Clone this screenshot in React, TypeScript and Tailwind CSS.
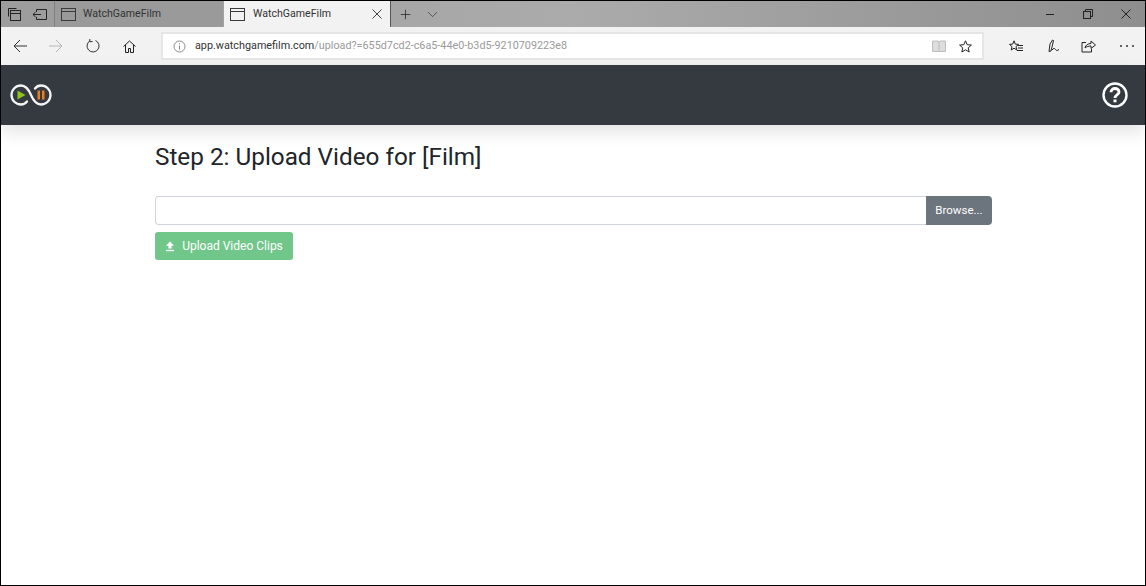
import React from 'react';
import { ChevronDown, Plus } from 'lucide-react';

const uiFont = "font-['Roboto','Noto_Sans',sans-serif]";

const TabIcon = () => (
  <svg className="shrink-0" width="15" height="13" viewBox="0 0 15 13" fill="none" stroke="#3a3a3a" strokeWidth="1">
    <rect x="0.500" y="0.500" width="14" height="12" />
    <path d="M0.500 3.500h14" />
  </svg>
);

const Logo = () => (
  <svg width="44" height="24" viewBox="0 0 44 24" fill="none">
    <path
      d="M22 12C19.500 6 16.500 2.500 12 2.500a9.500 9.500 0 0 0 0 19c2.500 0 4.500-1 6-3M22 12c2.500 6 5.500 9.500 10 9.500a9.500 9.500 0 0 0 0-19c-2.500 0-4.500 1-6 3"
      stroke="#f4f4f4"
      strokeWidth="2.300"
      strokeLinecap="round"
    />
    <path d="M8.500 7.500l8 4.500-8 4.500z" fill="#8fc31f" />
    <rect x="28.500" y="7.500" width="2.500" height="9" fill="#e87d25" />
    <rect x="33" y="7.500" width="2.500" height="9" fill="#e87d25" />
  </svg>
);

const UploadGlyph = () => (
  <svg width="10" height="11" viewBox="0 0 10 11" fill="#ffffff">
    <path d="M5 0.500L9 4.700H6.600V7.500H3.400V4.700H1z" />
    <rect x="1" y="8.800" width="8" height="1.400" />
  </svg>
);

const Back = ({ color }: { color: string }) => (
  <svg width="14" height="14" viewBox="0 0 14 14" fill="none" stroke={color} strokeWidth="1">
    <path d="M1 7h13M7 1L1 7l6 6" />
  </svg>
);

export default function App() {
  return (
    <div className="h-[586px] w-[1146px] overflow-hidden border border-black bg-white">
      {/* title bar */}
      <div className={`flex h-[26px] items-stretch bg-linear-to-r from-[#9c9c9c] via-[#ababab] to-[#8e8e8e] ${uiFont}`}>
        <div className="flex w-[54px] items-center border-r border-[#808080]">
          <svg className="ml-[7px]" width="13" height="13" viewBox="0 0 13 13" fill="none" stroke="#222" strokeWidth="1">
            <path d="M0.500 8.500V0.500H8.500" />
            <rect x="2.500" y="2.500" width="10" height="10" />
            <path d="M2.500 5.500h10" />
          </svg>
          <svg className="ml-[12px]" width="14" height="11" viewBox="0 0 14 11" fill="none" stroke="#222" strokeWidth="1">
            <path d="M3.500 3V0.500h10v10h-10V8M0 5.500h8M2.500 3L0 5.500 2.500 8" />
          </svg>
        </div>
        <div className="flex w-[168px] items-center gap-[7px] bg-[#9a9a9a] pl-[6px] text-[10.600px] text-[#333333]">
          <TabIcon />
          <span>WatchGameFilm</span>
        </div>
        <div className="ml-px flex w-[166px] items-center bg-[#f2f2f2] pl-[6px] text-[10.600px] text-[#333333]">
          <TabIcon />
          <span className="ml-[8px]">WatchGameFilm</span>
          <svg className="ml-auto mr-[8px] shrink-0" width="10" height="10" viewBox="0 0 10 10" stroke="#444" strokeWidth="1">
            <path d="M0.500 0.500l9 9M9.500 0.500l-9 9" />
          </svg>
        </div>
        <div className="flex items-center border-l border-[#555555]">
          <Plus className="ml-[7px] text-[#222222]" size={15} strokeWidth={1.2} />
          <ChevronDown className="ml-[11px] text-[#333333]" size={17} strokeWidth={1} />
        </div>
        <div className="ml-auto flex items-center pr-[14px]">
          <div className="h-px w-[8px] bg-[#222222]" />
          <svg className="ml-[29px]" width="10" height="10" viewBox="0 0 10 10" fill="none" stroke="#222" strokeWidth="1">
            <rect x="0.500" y="2.500" width="7" height="7" />
            <path d="M2.500 2.500V0.500h7v7H7.500" />
          </svg>
          <svg className="ml-[28px]" width="10" height="10" viewBox="0 0 10 10" stroke="#222" strokeWidth="1">
            <path d="M0.500 0.500l9 9M9.500 0.500l-9 9" />
          </svg>
        </div>
      </div>

      {/* address bar */}
      <div className={`flex h-[38px] items-center bg-[#f2f2f2] ${uiFont}`}>
        <div className="ml-[12px]"><Back color="#333333" /></div>
        <div className="ml-[22px] rotate-180"><Back color="#b5b5b5" /></div>
        <svg className="ml-[23px]" width="14" height="14" viewBox="0 0 14 14" fill="none" stroke="#333" strokeWidth="1">
          <path d="M4 1.800A6 6 0 1 0 9.500 1.500M3.800 0v2.600h2.800" />
        </svg>
        <svg className="ml-[23px]" width="13" height="13" viewBox="0 0 13 13" fill="none" stroke="#222" strokeWidth="1">
          <path d="M0.500 6.500L6.500 1l6 5.500M2.500 5v7.500h3V8.500h2v4h3V5" />
        </svg>
        <div className="ml-[25px] flex h-[28px] w-[823px] items-center border-2 border-[#e6e6e6] bg-white pl-[10px]">
          <svg className="shrink-0" width="13" height="13" viewBox="0 0 13 13" fill="none" stroke="#8a8a8a" strokeWidth="1">
            <circle cx="6.500" cy="6.500" r="5.500" />
            <path d="M6.500 5.500v4M6.500 3.300v1" />
          </svg>
          <span className="ml-[9px] text-[10.800px] text-[#333333]">
            app.watchgamefilm.com<span className="text-[#9a9a9a]">/upload?=655d7cd2-c6a5-44e0-b3d5-9210709223e8</span>
          </span>
          <svg className="ml-auto" width="14" height="13" viewBox="0 0 14 13" fill="#dddddd" stroke="#bdbdbd" strokeWidth="1">
            <path d="M0.500 1h5.500L7 2l1-1h5.500v10.500H0.500zM7 2v9.500" />
          </svg>
          <svg className="ml-[13px] mr-[10px]" width="13" height="13" viewBox="0 0 13 13" fill="none" stroke="#222" strokeWidth="1">
            <path d="M6.500 0.800l1.700 3.900 4.200 0.400-3.200 2.800 1 4.100-3.700-2.200-3.700 2.200 1-4.100L0.600 5.100l4.200-0.400z" />
          </svg>
        </div>
        <svg className="ml-[25px]" width="14" height="13" viewBox="0 0 14 13" fill="none" stroke="#222" strokeWidth="1">
          <path d="M5 0.800l1.300 3.300 3.200 0.300-2.500 2.200 0.800 3.400L5 8.200l-2.800 1.800 0.800-3.400L0.500 4.400l3.200-0.300zM9 5.500h5M9 8h5M8 10.500h6" />
        </svg>
        <svg className="ml-[25px]" width="14" height="14" viewBox="0 0 14 14" fill="none" stroke="#222" strokeWidth="1">
          <path d="M1 12.500L2 5l2.500-4 1 0.500L4.500 6 3 12zM4 11c1.500-2 2.500-2 3.500-0.500s2 1 3.500 0" />
        </svg>
        <svg className="ml-[19px]" width="15" height="14" viewBox="0 0 15 14" fill="none" stroke="#222" strokeWidth="1">
          <path d="M5 3.500H1v9.500h9.500V10M4 9c0.500-3 3-4.500 6-4.500V2l4.500 4L10 9.500V7C8 7 5.500 7.500 4 9z" />
        </svg>
        <div className="ml-[24px] flex gap-[4px]">
          <div className="size-[2px] rounded-full bg-[#333333]" />
          <div className="size-[2px] rounded-full bg-[#333333]" />
          <div className="size-[2px] rounded-full bg-[#333333]" />
        </div>
      </div>

      {/* app navbar */}
      <div className="relative flex h-[60px] items-center justify-between bg-[#343a40] pl-[8px] pr-[17px] shadow-[0_8px_16px_rgba(0,0,0,0.1)]">
        <Logo />
        <svg width="26" height="26" viewBox="0 0 26 26" fill="none" stroke="#ffffff">
          <circle cx="13" cy="13" r="11.500" strokeWidth="2.400" />
          <path d="M9 10.200c0-2.400 1.800-3.700 4-3.700s4 1.300 4 3.400c0 3-4 2.900-4 6" strokeWidth="2.800" />
          <path d="M13 17.500v2.800" strokeWidth="3" />
        </svg>
      </div>

      {/* upload form */}
      <div className={`pl-[154px] pt-[17px] ${uiFont}`}>
        <h1 className="text-[24.300px] leading-[30px] text-[#212529]">Step 2: Upload Video for [Film]</h1>
        <div className="mt-[24px] flex h-[29px] w-[837px]">
          <div className="flex-1 rounded-l-[4px] border border-r-0 border-[#ced4da] bg-white" />
          <button className="w-[66px] rounded-r-[4px] bg-[#6c757d] text-[11.500px] text-white">Browse...</button>
        </div>
        <button className="mt-[7px] flex h-[28px] w-[138px] items-center justify-center gap-[7px] rounded-[3px] bg-[#71c68a] text-[12px] text-white">
          <UploadGlyph />
          Upload Video Clips
        </button>
      </div>
    </div>
  );
}
